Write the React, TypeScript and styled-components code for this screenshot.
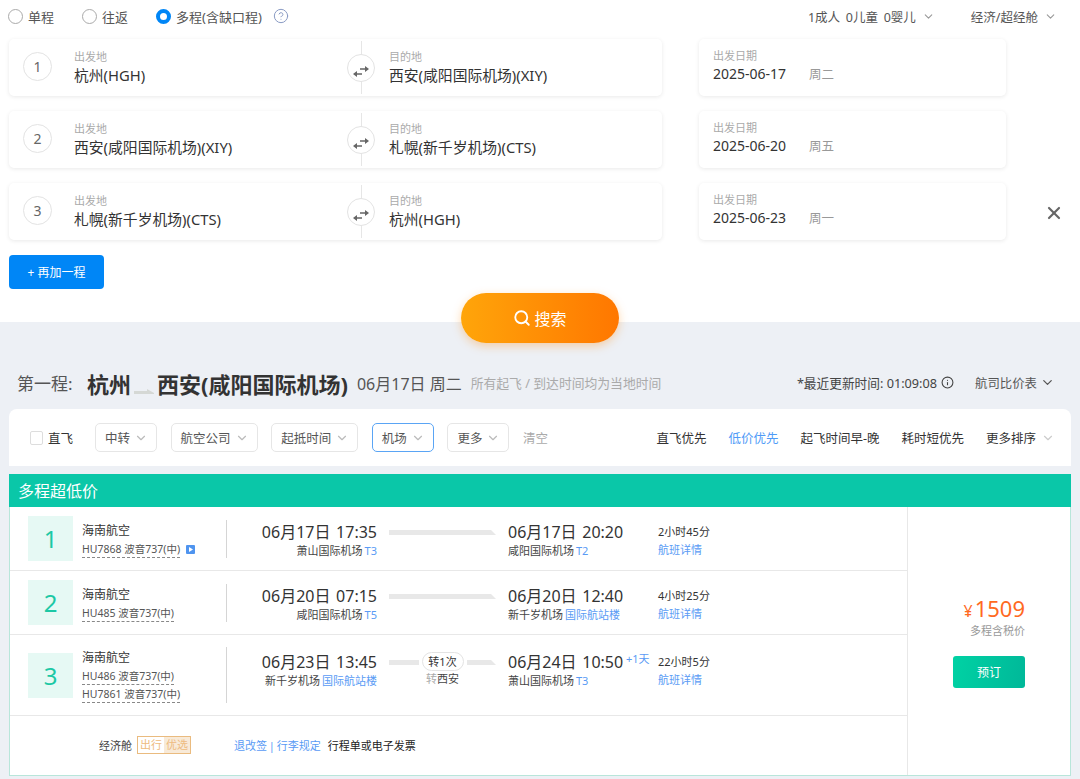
import React from 'react';
import styled, { createGlobalStyle } from 'styled-components';
import { ChevronDown, CircleHelp, Info, Search, X } from 'lucide-react';

const Global = createGlobalStyle`
html, body {
  margin: 0;
  height: 779px;
  overflow: hidden;
  background: #edf0f5;
  font-family: "Noto Sans", "Noto Sans CJK SC", sans-serif;
  color: #333;
}
*, *::before, *::after { box-sizing: border-box; }
`;

const Top = styled.section`
  background: #fff;
  height: 322px;
  padding: 0 9px;
`;
const TripBar = styled.div`
  height: 32px;
  display: flex;
  align-items: center;
  margin-left: -1px;
  font-size: 13px;
  color: #555;
`;
const Radio = styled.label<{ $on?: boolean }>`
  display: flex;
  align-items: center;
  gap: 5px;
  width: ${(p) => (p.$on ? 'auto' : '74px')};
  white-space: nowrap;
  &::before {
    content: '';
    flex: none;
    width: 15px;
    height: 15px;
    border-radius: 50%;
    background: #fff;
    border: ${(p) => (p.$on ? '4px solid #0086f6' : '1px solid #aaa')};
  }
`;
const Help = styled.span`
  display: flex;
  margin-left: 11px;
  color: #8a9bc4;
`;
const TopRight = styled.div`
  margin-left: auto;
  margin-right: 14px;
  display: flex;
  gap: 36px;
  font-size: 12.5px;
`;
const Drop = styled.span`
  display: flex;
  align-items: center;
  gap: 6px;
  color: #555;
  word-spacing: 2.5px;
  svg { color: #999; }
`;
const SegRow = styled.div`
  display: flex;
  align-items: flex-start;
  height: 57px;
  margin: 7px 0 15px;
`;
const Card = styled.div`
  background: #fff;
  border-radius: 5px;
  height: 57px;
  padding-bottom: 2px;
  box-shadow: 0 1px 4px rgba(0, 0, 0, 0.09);
  display: flex;
  align-items: center;
`;
const RouteCard = styled(Card)`
  width: 653px;
  padding-left: 14px;
`;
const Num = styled.span`
  width: 29px;
  height: 29px;
  flex: none;
  border-radius: 50%;
  border: 1px solid #e3e3e3;
  display: flex;
  align-items: center;
  justify-content: center;
  font-size: 14px;
  color: #666;
`;
const Place = styled.div<{ $w: number; $ml: number }>`
  width: ${(p) => p.$w}px;
  margin-left: ${(p) => p.$ml}px;
`;
const Small = styled.div`
  font-size: 11px;
  line-height: 16px;
  color: #aaa;
`;
const Value = styled.div`
  font-size: 14.8px;
  line-height: 20px;
  color: #333;
  white-space: nowrap;
`;
const DateValue = styled.div`
  font-size: 14px;
  line-height: 20px;
  color: #333;
  white-space: nowrap;
  > span {
    color: #999;
    font-size: 12.5px;
    margin-left: 23px;
  }
`;
const Swap = styled.div`
  position: relative;
  width: 28px;
  height: 57px;
  margin-bottom: -2px;
  flex: none;
  display: flex;
  align-items: center;
  justify-content: center;
  &::before {
    content: '';
    position: absolute;
    left: 13.5px;
    top: 2px;
    bottom: 2px;
    width: 1px;
    background: #e6e6e6;
  }
`;
const SwapDisc = styled.span`
  position: relative;
  width: 28px;
  height: 28px;
  border-radius: 50%;
  border: 1px solid #e3e3e3;
  background: #fff;
  display: flex;
  align-items: center;
  justify-content: center;
  svg { margin-top: 7px; }
`;
const DateCard = styled(Card)`
  width: 307px;
  margin-left: 37px;
  padding-left: 14px;
`;
const Remove = styled.span`
  margin: 20px 0 0 38px;
  display: flex;
  color: #666;
`;
const AddBtn = styled.button`
  width: 95px;
  height: 34px;
  border: 0;
  border-radius: 4px;
  background: #0086f6;
  color: #fff;
  font: inherit;
  font-size: 12px;
`;
const SearchWrap = styled.div`
  display: flex;
  justify-content: center;
  margin-top: 4px;
`;
const SearchBtn = styled.button`
  width: 158px;
  height: 50px;
  border: 0;
  border-radius: 25px;
  background: linear-gradient(90deg, #ffa50a, #ff7700);
  box-shadow: 0 3px 10px rgba(255, 140, 20, 0.35);
  color: #fff;
  font: inherit;
  font-size: 16px;
  display: flex;
  align-items: center;
  justify-content: center;
  gap: 3px;
`;

const Heading = styled.div`
  height: 87px;
  padding: 34px 25px 0 17px;
  display: flex;
  align-items: center;
  white-space: nowrap;
`;
const HeadLabel = styled.span`
  font-size: 17px;
  color: #555;
  width: 70px;
`;
const HeadCity = styled.b`
  font-size: 22px;
  font-weight: 700;
  color: #333;
`;
const HeadArrow = styled.svg`
  margin: 17px 3px 0;
`;
const HeadDate = styled.span`
  font-size: 16px;
  color: #555;
  margin-left: 9px;
`;
const HeadNote = styled.span`
  font-size: 12.8px;
  color: #aaa;
  margin-left: 9px;
`;
const HeadRight = styled.span`
  margin-left: auto;
  display: flex;
  align-items: center;
  font-size: 12.7px;
  color: #444;
`;
const FareLink = styled.span`
  display: flex;
  align-items: center;
  gap: 3px;
  margin-left: 21px;
  font-size: 12.4px;
  color: #555;
`;

const Filter = styled.div`
  margin: 0 9px;
  height: 57px;
  background: #fff;
  border-radius: 8px 8px 0 0;
  padding: 0 16px 0 21px;
  display: flex;
  align-items: center;
  font-size: 12.5px;
`;
const Check = styled.label`
  display: flex;
  align-items: center;
  gap: 5px;
  width: 65px;
  &::before {
    content: '';
    width: 13px;
    height: 14px;
    border: 1px solid #ddd;
    border-radius: 2px;
  }
`;
const Chip = styled.span<{ $active?: boolean }>`
  height: 29px;
  border-radius: 5px;
  border: 1px solid ${(p) => (p.$active ? '#5aa5f5' : '#e6e6e6')};
  padding: 0 8px 0 9px;
  margin-right: 13.6px;
  display: flex;
  align-items: center;
  gap: 4px;
  color: #555;
  svg { color: #bbb; }
`;
const Clear = styled.span`
  color: #aaa;
`;
const Sorts = styled.div`
  margin-left: auto;
  display: flex;
  align-items: center;
  gap: 22px;
`;
const Sort = styled.span<{ $active?: boolean }>`
  color: ${(p) => (p.$active ? '#4f9bf7' : '#333')};
  display: flex;
  align-items: center;
  gap: 5px;
  svg { color: #ccc; }
`;

const Result = styled.div`
  margin: 8px 9px 0;
  height: 302px;
  background: #fff;
  border: 1px solid #b8e6da;
  border-top: 0;
  display: flex;
  flex-direction: column;
`;
const Banner = styled.div`
  height: 33px;
  flex: none;
  margin: 0 -1px;
  padding-left: 9px;
  background: #0ac7a8;
  color: #fff;
  font-size: 16px;
  line-height: 35px;
`;
const ResultBody = styled.div`
  flex: 1;
  display: flex;
`;
const Legs = styled.div`
  width: 897px;
`;
const Leg = styled.div<{ $h: number }>`
  height: ${(p) => p.$h}px;
  border-bottom: 1px solid #e8e8e8;
  padding-left: 18px;
  display: flex;
  align-items: center;
`;
const LegNum = styled.div`
  width: 45px;
  height: 45px;
  flex: none;
  background: #e6f9f4;
  color: #1cc8a5;
  font-size: 24px;
  display: flex;
  align-items: center;
  justify-content: center;
`;
const Airline = styled.div`
  width: 154px;
  padding: 2px 0 0 9px;
  flex: none;
  border-right: 1px solid #d5d5d5;
  font-size: 12px;
  line-height: 18px;
`;
const Flight = styled.div`
  display: flex;
  align-items: center;
  gap: 6px;
  margin-top: 1px;
  font-size: 10.5px;
  line-height: 16px;
  color: #555;
  > u {
    text-decoration: none;
    border-bottom: 1px dashed #888;
  }
`;
const Times = styled.div<{ $tall?: boolean }>`
  align-self: flex-start;
  padding-top: ${(p) => (p.$tall ? 16 : 14)}px;
  display: flex;
`;
const Stamp = styled.div<{ $right?: boolean }>`
  flex: none;
  width: 150px;
  text-align: ${(p) => (p.$right ? 'left' : 'right')};
  position: relative;
`;
const When = styled.div`
  font-size: 16px;
  line-height: 22px;
  color: #333;
  white-space: nowrap;
  word-spacing: 1.5px;
`;
const Where = styled.div`
  font-size: 11px;
  line-height: 15px;
  color: #444;
  white-space: nowrap;
  > span { color: #5a9bf5; margin-left: 2px; }
`;
const NextDay = styled.span`
  position: absolute;
  left: 118px;
  top: -1px;
  font-size: 11px;
  color: #5a9bf5;
`;
const Track = styled.div`
  width: 107px;
  margin: 0 12px;
  height: 22px;
  flex: none;
  position: relative;
  display: flex;
  align-items: center;
  flex-direction: column;
  svg { position: absolute; left: 0; top: 8px; }
`;
const StopPill = styled.span`
  position: relative;
  width: 42px;
  height: 19px;
  margin-top: 1px;
  border-radius: 10px;
  border: 1px solid #e3e3e3;
  background: #fff;
  font-size: 11px;
  line-height: 17px;
  text-align: center;
`;
const StopCity = styled.span`
  font-size: 11px;
  line-height: 15px;
  color: #444;
  > i { font-style: normal; color: #aaa; }
`;
const Duration = styled.div`
  font-size: 11px;
  line-height: 18px;
  color: #333;
  margin-top: 2px;
  > div { color: #5a9bf5; }
`;
const Extra = styled.div`
  height: 59px;
  padding: 0 0 2px 89px;
  display: flex;
  align-items: center;
  font-size: 11px;
  color: #444;
`;
const Badge = styled.span`
  margin-left: 5px;
  width: 54px;
  height: 18px;
  display: flex;
  border: 1px solid #eabb7f;
  color: #eebb80;
  line-height: 16px;
  text-align: center;
  > span { flex: 1; }
  > span + span { background: #f8ead8; }
`;
const Rules = styled.span`
  margin-left: 43px;
  color: #5a9bf5;
  word-spacing: -1px;
`;
const Invoice = styled.span`
  margin-left: 7px;
  color: #222;
`;
const PriceCol = styled.div`
  flex: 1;
  border-left: 1px solid #e8e8e8;
  padding: 89px 45px 0 0;
  display: flex;
  flex-direction: column;
  align-items: flex-end;
`;
const Price = styled.div`
  font-size: 22px;
  line-height: 24px;
  color: #ff6a1f;
  > span { font-size: 16px; margin-right: 2px; }
`;
const PriceNote = styled.div`
  font-size: 11px;
  line-height: 15px;
  color: #999;
`;
const BookBtn = styled.button`
  width: 72px;
  height: 32px;
  margin-top: 18px;
  border: 0;
  border-radius: 3px;
  background: linear-gradient(100deg, #00d2a4, #00b899);
  color: #fff;
  font: inherit;
  font-size: 12px;
`;

const SwapIcon = () => (
  <svg width="16" height="11" viewBox="0 0 16 11" fill="#666">
    <path d="M7 2.2 H12 V0 L16 3 L12 6 V3.8 H7 Z" />
    <path d="M9 7.2 H4 V5 L0 8 L4 11 V8.8 H9 Z" />
  </svg>
);

const BarIcon = ({ split }: { split?: boolean }) => (
  <svg width="107" height="6" viewBox="0 0 107 6" fill="#e8e8e8">
    {split ? (
      <>
        <rect x="0" y="1" width="30" height="5" />
        <path d="M78 1 H102 L107 6 H78 Z" />
      </>
    ) : (
      <path d="M0 1 H102 L107 6 H0 Z" />
    )}
  </svg>
);

const segments = [
  { from: '杭州(HGH)', to: '西安(咸阳国际机场)(XIY)', date: '2025-06-17', week: '周二' },
  { from: '西安(咸阳国际机场)(XIY)', to: '札幌(新千岁机场)(CTS)', date: '2025-06-20', week: '周五' },
  { from: '札幌(新千岁机场)(CTS)', to: '杭州(HGH)', date: '2025-06-23', week: '周一' },
];

const legs = [
  {
    h: 64,
    flights: ['HU7868 波音737(中)'],
    dep: '06月17日 17:35', depAt: '萧山国际机场', depT: 'T3',
    arr: '06月17日 20:20', arrAt: '咸阳国际机场', arrT: 'T2',
    time: '2小时45分',
  },
  {
    h: 64,
    flights: ['HU485 波音737(中)'],
    dep: '06月20日 07:15', depAt: '咸阳国际机场', depT: 'T5',
    arr: '06月20日 12:40', arrAt: '新千岁机场', arrT: '国际航站楼',
    time: '4小时25分',
  },
  {
    h: 81,
    flights: ['HU486 波音737(中)', 'HU7861 波音737(中)'],
    dep: '06月23日 13:45', depAt: '新千岁机场', depT: '国际航站楼',
    arr: '06月24日 10:50', arrAt: '萧山国际机场', arrT: 'T3',
    time: '22小时5分',
  },
];

export default function App() {
  return (
    <>
      <Global />
      <Top>
        <TripBar>
          <Radio>单程</Radio>
          <Radio>往返</Radio>
          <Radio $on>多程(含缺口程)</Radio>
          <Help><CircleHelp size={16} strokeWidth={1.5} /></Help>
          <TopRight>
            <Drop>1成人 0儿童 0婴儿 <ChevronDown size={13} /></Drop>
            <Drop>经济/超经舱 <ChevronDown size={13} /></Drop>
          </TopRight>
        </TripBar>
        {segments.map((s, i) => (
          <SegRow key={s.date}>
            <RouteCard>
              <Num>{i + 1}</Num>
              <Place $w={273} $ml={22}>
                <Small>出发地</Small>
                <Value>{s.from}</Value>
              </Place>
              <Swap>
                <SwapDisc><SwapIcon /></SwapDisc>
              </Swap>
              <Place $w={260} $ml={14}>
                <Small>目的地</Small>
                <Value>{s.to}</Value>
              </Place>
            </RouteCard>
            <DateCard>
              <div>
                <Small>出发日期</Small>
                <DateValue>{s.date}<span>{s.week}</span></DateValue>
              </div>
            </DateCard>
            {i === 2 && <Remove><X size={20} strokeWidth={2.6} /></Remove>}
          </SegRow>
        ))}
        <AddBtn>+ 再加一程</AddBtn>
        <SearchWrap>
          <SearchBtn><Search size={18} strokeWidth={2.5} />搜索</SearchBtn>
        </SearchWrap>
      </Top>
      <Heading>
        <HeadLabel>第一程:</HeadLabel>
        <HeadCity>杭州</HeadCity>
        <HeadArrow width="20" height="5" viewBox="0 0 20 5" fill="#d5d8d5">
          <path d="M0 2 H13 L13 0 L20 4 V5 H0 Z" />
        </HeadArrow>
        <HeadCity>西安(咸阳国际机场)</HeadCity>
        <HeadDate>06月17日 周二</HeadDate>
        <HeadNote>所有起飞 / 到达时间均为当地时间</HeadNote>
        <HeadRight>
          *最近更新时间: 01:09:08
          <Info size={13} style={{ marginLeft: 4 }} />
          <FareLink>航司比价表 <ChevronDown size={15} /></FareLink>
        </HeadRight>
      </Heading>
      <Filter>
        <Check>直飞</Check>
        <Chip>中转 <ChevronDown size={14} /></Chip>
        <Chip>航空公司 <ChevronDown size={14} /></Chip>
        <Chip>起抵时间 <ChevronDown size={14} /></Chip>
        <Chip $active>机场 <ChevronDown size={14} /></Chip>
        <Chip>更多 <ChevronDown size={14} /></Chip>
        <Clear>清空</Clear>
        <Sorts>
          <Sort>直飞优先</Sort>
          <Sort $active>低价优先</Sort>
          <Sort>起飞时间早-晚</Sort>
          <Sort>耗时短优先</Sort>
          <Sort>更多排序 <ChevronDown size={14} /></Sort>
        </Sorts>
      </Filter>
      <Result>
        <Banner>多程超低价</Banner>
        <ResultBody>
          <Legs>
            {legs.map((l, i) => (
              <Leg key={l.dep} $h={l.h}>
                <LegNum>{i + 1}</LegNum>
                <Airline>
                  海南航空
                  {l.flights.map((f) => (
                    <Flight key={f}>
                      <u>{f}</u>
                      {i === 0 && (
                        <svg width="9" height="9" viewBox="0 0 9 9">
                          <rect width="9" height="9" rx="1" fill="#4f94ef" />
                          <path d="M3 2 L7 4.5 L3 7 Z" fill="#fff" />
                        </svg>
                      )}
                    </Flight>
                  ))}
                </Airline>
                <Times $tall={i === 2}>
                  <Stamp>
                    <When>{l.dep}</When>
                    <Where>{l.depAt}<span>{l.depT}</span></Where>
                  </Stamp>
                  <Track>
                    <BarIcon split={i === 2} />
                    {i === 2 && (
                      <>
                        <StopPill>转1次</StopPill>
                        <StopCity><i>转</i>西安</StopCity>
                      </>
                    )}
                  </Track>
                  <Stamp $right>
                    <When>{l.arr}</When>
                    <Where>{l.arrAt}<span>{l.arrT}</span></Where>
                    {i === 2 && <NextDay>+1天</NextDay>}
                  </Stamp>
                  <Duration>
                    {l.time}
                    <div>航班详情</div>
                  </Duration>
                </Times>
              </Leg>
            ))}
            <Extra>
              经济舱
              <Badge><span>出行</span><span>优选</span></Badge>
              <Rules>退改签 | 行李规定</Rules>
              <Invoice>行程单或电子发票</Invoice>
            </Extra>
          </Legs>
          <PriceCol>
            <Price><span>¥</span>1509</Price>
            <PriceNote>多程含税价</PriceNote>
            <BookBtn>预订</BookBtn>
          </PriceCol>
        </ResultBody>
      </Result>
    </>
  );
}
